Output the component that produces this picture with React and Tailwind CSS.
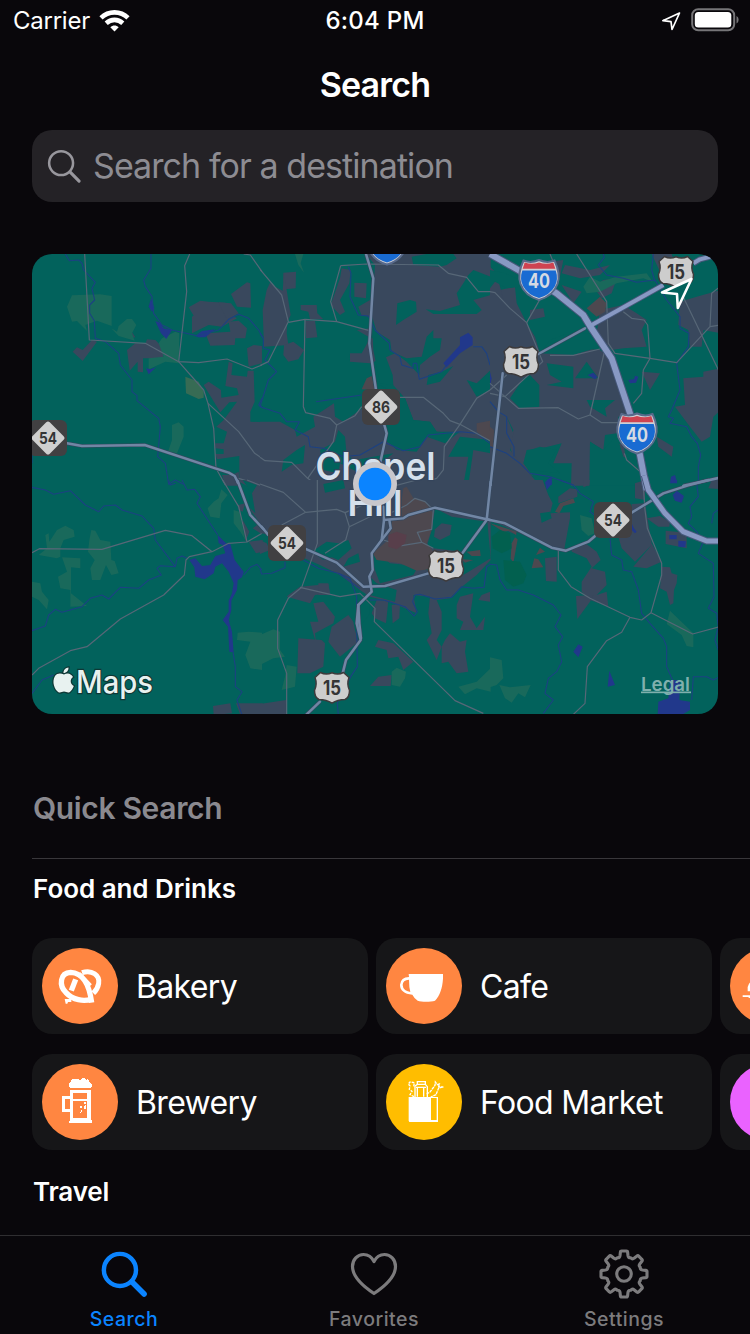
import React from "react";

const GREEN = "#02625c";
const URBAN = "#39485d";
const PARK = "#19695b";
const WATER = "#21388b";
const BROWN = "#4d484f";

/* The map is stored as six tiles, each drawn at three units per pixel. */
const tiles = [
  {
    at: "translate(32 250) scale(.33333)",
    urban: [
      "470,172 505,152 530,155 580,158 585,190 615,205 570,230 530,225 480,250 480,200 520,172 485,197",
      "560,157 597,160 620,190 585,210",
      "597,132 645,97 655,100 657,173 615,170",
      "520,250 595,245 590,215 620,212 645,235 640,265 610,265 608,285 535,287",
      "645,295 665,285 690,288 690,340 650,350",
      "285,300 310,280 340,282 345,268 370,270 390,290 395,325 333,325 333,367 317,365 317,335 293,362",
      "290,250 300,247 310,262 300,263",
      "122,305 135,292 152,300 180,270 195,275 152,333",
      "515,405 530,395 567,420 568,443 620,435 615,415 580,408 590,335 602,340 598,375 645,380 647,362 665,362 668,455 655,485 655,515 692,517 692,707 640,690 622,690 622,618 555,628 550,612 575,612 575,598 550,595 550,580 575,580 585,545 553,530 575,510 615,455 592,457 565,487",
      "570,675 600,675 620,665 625,707 580,707",
    ],
    cut: [],
    park: [
      "120,136 205,133 239,138 239,228 195,212 160,225 165,243 135,213 120,215 105,170",
      "238,235 255,245 260,228 285,207 300,207 313,225 300,250 308,272 260,258",
      "390,265 430,245 442,250 440,340 400,335 350,358 350,325 395,320 380,280",
      "420,525 440,517 455,530 455,560 435,610 408,605 420,570",
    ],
    olive: ["460,380 500,395 515,425 515,443 500,447 462,430"],
    brown: [],
    water: [
      "357,145 367,175 360,185 350,170",
      "370,213 385,218 395,235 420,240 403,267 387,250",
      "490,258 510,243 550,238 520,262 500,262",
      "342,355 355,358 372,352 350,373",
    ],
    river: [
      "100,12 112,32 140,30 150,40 155,60 190,97 180,115 188,150 173,165 173,190 187,212 190,265 220,275 260,310 265,345 300,390 300,425 315,437 315,452 380,505 385,530 377,620 400,640 410,703 430,690 455,703",
      "357,12 357,55 335,90 340,110 360,140 365,190 390,225 420,240 495,257 560,240 590,208 620,193 650,205 680,240 692,262",
      "0,615 0,640",
      "690,445 680,465 690,470",
    ],
    minor: [
      "158,12 172,270 340,280 440,335 515,420 528,460 545,535 552,655 580,705",
      "473,12 458,47 464,125 440,335 500,338 585,327 660,357 690,345",
      "528,460 620,545 668,610 690,625",
      "635,12 655,15 690,65",
      "620,685 690,707",
    ],
    major: ["105,580 150,588 338,585 550,655 590,668 608,678 618,698"],
    inter: [],
  },
  {
    at: "translate(260 250) scale(.33333)",
    urban: [
      "70,68 108,65 107,115 75,118 70,90",
      "20,120 30,98 45,110 68,122 72,70 92,195 82,215 80,250 85,285 12,290 8,180",
      "240,85 245,55 272,60 268,100 240,150 255,185 240,195 212,165",
      "283,98 320,100 318,145 283,140",
      "295,170 330,150 330,200 305,197",
      "290,240 330,235 328,262",
      "122,165 170,165 172,190 190,208 150,207 145,185 122,180",
      "135,212 165,212 172,262 138,265",
      "72,285 100,275 132,300 115,328 85,335 70,315",
      "270,310 305,310 330,265 365,265 390,295 370,325 330,340 270,335",
      "0,515 60,515 105,540 110,560 165,530 160,500 195,478 222,460 225,500 250,515 308,475 378,525 380,575 420,600 470,602 500,560 560,545 692,560 692,707 0,707",
      "345,45 318,12 692,12 692,570 590,548 530,545 510,515 460,510 435,445 395,400 340,300 335,190",
    ],
    cut: [
      "408,225 412,160 450,150 468,155 470,185 430,210",
      "497,178 540,183 600,165 590,130 610,100 625,75 640,60 692,80 692,135 640,150 665,180 650,192 520,192",
      "455,20 500,12 580,12 590,25 560,45 540,50 460,45",
      "335,195 350,245 390,270 395,305 440,325 485,320 500,260 520,240 520,265 545,265 540,300 510,320 480,345 478,375 440,335 405,310 378,322 398,375 400,405 360,400 340,300",
      "505,375 545,365 580,348 540,395 500,405",
      "350,400 435,445 460,510 510,515 530,545 600,545 555,580 500,560 470,605 410,600 380,570 380,520",
      "600,560 692,570 692,610 640,600 625,705 610,705 625,620 565,620",
      "65,665 70,630 110,600 135,585 130,640 95,645",
      "180,600 225,575 235,540 255,560 260,615 285,630 400,610 375,630 310,650 300,670 240,640 235,670 190,660",
      "620,390 650,400 692,360 692,420 650,440",
    ],
    park: ["105,12 130,12 122,40 132,68 115,45"],
    olive: [],
    brown: [
      "320,385 335,378 345,420 305,418",
      "650,520 690,512 690,575 650,545",
    ],
    water: [
      "550,340 600,285 600,262 625,248 638,262 638,285 600,310 560,352",
    ],
    river: [
      "265,50 273,70 270,140 295,195 325,198 345,240 388,280 390,300 420,320 425,345 458,355 460,340 470,340 478,388 545,365 560,345",
      "640,290 665,290 680,310 690,345",
      "0,250 10,265 10,295 30,300 15,330 50,365 25,390 0,470 60,490 80,515 118,515 105,540 145,560 150,590 190,595 250,620 300,615 370,575 430,602 480,590 505,555 600,545 650,550 690,580",
      "168,455 305,435",
    ],
    minor: [
      "0,58 65,135 85,215 25,335 0,347",
      "85,217 135,208 230,215 328,242",
      "135,208 130,470 137,488 210,505 230,525 285,497 305,470",
      "230,525 220,575 143,685 95,637 15,632 0,622",
      "143,685 170,705",
      "242,47 320,42 535,45 565,70 620,82 655,125 690,125",
      "242,47 212,155 230,215",
      "420,442 490,442 550,490 570,512 600,523 690,572",
      "690,420 650,445 600,523 553,590 550,660 530,685 500,695 450,690 420,705",
    ],
    major: ["318,12 340,85 328,280 348,420", "373,525 380,550 358,650"],
    inter: [],
  },
  {
    at: "translate(490 250) scale(.33333)",
    urban: [
      "0,115 30,120 75,110 80,160 110,220 135,260 150,310 215,290 330,300 370,330 400,430 420,490 385,500 380,550 345,555 340,600 300,575 298,707 243,707 245,640 190,640 215,580 155,595 110,600 100,640 130,680 75,640 60,590 70,540 50,500 0,540",
      "0,500 50,500 70,550 60,600 100,650 150,707 0,707",
      "0,50 20,70 40,150 0,150",
      "330,180 400,165 440,190 470,210 455,240 470,290 400,295 365,300 320,250",
      "225,45 300,60 360,45 330,75 270,85 215,70",
      "340,90 380,85 365,130 335,145 310,110",
      "215,105 275,125 250,160",
      "485,12 545,12 560,55 510,65",
      "570,155 620,140 692,120 692,250 640,240 635,290 600,290 595,240 565,225",
      "580,385 640,380 640,365 692,355 692,480 670,500 660,560 635,575 600,530 555,470 585,465",
      "455,365 510,370 480,420",
      "500,560 550,590 545,620 505,590",
      "370,585 400,580 410,640 385,610",
      "120,180 160,175 165,200 120,210",
      "100,45 220,30 210,80 160,100 100,100",
    ],
    cut: [
      "0,60 45,70 90,90 90,110 50,115 15,95 0,115",
      "170,340 210,345 250,350 250,415 170,405 215,395 180,375",
      "255,385 290,335 325,385",
      "60,445 100,385 120,375 148,405 148,470 90,475",
      "290,450 375,450 345,475 350,500 300,470",
      "150,310 180,270 220,255 300,250 330,290 250,315",
      "300,575 340,600 380,555 400,620 450,640 450,707 300,707",
      "120,600 150,590 200,600 175,640 210,670 120,660",
    ],
    park: [
      "280,110 300,80 330,95 380,80 470,70 488,95 460,85 380,100 330,125 290,130",
    ],
    olive: [],
    brown: ["290,175 330,140 350,160 345,185 320,200", "0,530 12,540 10,590 0,590"],
    water: [
      "293,375 310,368 322,380 315,388",
      "415,390 432,388 435,377 445,380 438,398 420,400",
      "543,680 555,675 562,700 540,700",
      "170,690 185,680 185,705 170,705",
      "0,365 5,385 0,410",
    ],
    river: [
      "340,12 343,22 325,45 350,75 400,85 440,97 495,90 530,150 570,200 570,235 597,250 595,290 560,340 570,420 545,480 535,500 550,505 540,520 590,530 605,560 622,580 632,615 625,650 625,705",
      "490,12 485,60 495,95",
      "0,590 50,610 90,640 120,670 180,680 250,705",
      "0,455 25,485 50,500 50,550 72,590 72,620",
    ],
    minor: [
      "0,125 15,128 60,175 110,218 158,335 110,380 45,440 0,400",
      "180,12 200,60 110,218",
      "180,316 250,316 330,297",
      "0,430 45,440 85,475 205,473 265,507 300,495 335,518 385,518",
      "300,495 345,297",
      "260,12 350,155 355,280 375,310 480,325 560,338 660,230 665,130 690,110",
      "400,185 425,205 462,210 473,225 480,325 460,360 455,430 430,460",
      "560,100 690,370",
      "660,230 690,225",
      "403,610 410,630 450,665",
      "0,420 50,375",
    ],
    major: ["145,312 285,235", "38,370 2,700", "580,707 690,683"],
    inter: [
      { p: "300,228 520,105", w: 14 },
      { p: "610,40 630,28 692,12", w: 14 },
      { p: "0,12 85,60 200,130 280,195 300,228 365,325 420,490 450,615 470,720", w: 20 },
    ],
  },
  {
    at: "translate(32 480) scale(.33333)",
    urban: [
      "572,0 610,0 640,15 655,30 655,90 692,140 692,0",
      "618,75 640,70 632,95 620,90",
      "632,120 652,155 640,185",
      "662,145 675,135 692,152 690,163",
      "650,185 692,180 692,215 672,220",
      "543,678 595,670 600,700 545,705",
      "612,670 692,670 692,705 625,705",
    ],
    cut: ["632,0 675,15 660,40 670,100 650,80 655,35"],
    park: [
      "40,165 50,160 52,185 75,150 100,137 125,150 128,170 95,180 85,205 85,230 75,235 20,225 45,205",
      "172,180 178,150 190,152 205,180 235,185 238,240 248,243 260,280 238,285 222,255 205,300 180,300 175,265 188,240 168,215",
      "90,232 145,235 145,265 117,262 117,340 165,378 115,380 115,330 85,325 78,290 105,275",
      "0,305 25,310 30,335 50,360 45,388 20,360 0,350",
      "560,55 568,28 587,45 568,70 563,115 535,110 527,85 545,65",
      "605,90 622,95 640,180 625,155 605,130",
      "617,458 650,455 690,458 690,570 655,565 640,525 655,485 615,480",
    ],
    olive: [],
    brown: [],
    water: [
      "557,165 582,190 595,192 608,240 635,275 630,292 617,300 615,330 598,362 598,390 590,420 600,455 605,517 592,515 588,440 572,420 590,395 590,362 600,340 605,310 590,275 570,250 550,260 545,280 518,298 490,290 487,262 472,240 490,235 510,258 535,255 550,228 580,220 572,195 560,190",
    ],
    river: [
      "0,22 40,30 65,43 115,32 160,75 200,95 215,78 250,75 270,90 330,108 365,145 370,180 430,260 435,235 450,228 465,235",
      "430,260 385,257 375,265 388,285 350,300 320,325 265,322 230,357 210,345 175,355 150,380 90,397 70,388 50,405 40,438 0,452",
      "450,0 465,30 488,28 505,50 495,70 557,165",
      "410,0 415,15 430,10",
      "603,515 610,560 610,620 630,635 615,660 630,705",
      "635,285 655,262 675,253 690,270",
      "0,640 30,600 65,585",
    ],
    minor: [
      "0,218 22,206 210,208 400,151 480,167 540,215",
      "0,585 20,565 115,512 165,500 265,417 395,345 457,285 462,240 472,230 540,215 590,190 645,186 690,160",
      "572,0 620,80 645,186",
      "645,0 690,18",
    ],
    major: ["617,3 655,105 694,147"],
    inter: [],
  },
  {
    at: "translate(260 480) scale(.33333)",
    urban: [
      "0,0 692,0 692,240 650,285 600,325 570,355 530,360 545,395 545,450 530,480 545,500 530,540 500,480 515,460 505,400 510,350 460,345 470,400 390,365 330,350 300,330 240,285 180,255 110,225 45,165 0,160",
      "0,180 20,190 30,210 0,222",
      "335,400 350,360 385,362 378,430 345,415",
      "395,375 420,372 418,415 398,430",
      "85,345 120,320 205,312 210,340 165,345 150,370 80,350",
      "175,310 205,310 210,345 175,345",
      "160,370 190,365 225,410 220,430 165,460 168,490 150,425 175,425",
      "215,440 265,405 280,425 285,450 295,485 240,530 205,485",
      "115,475 185,480 195,490 190,560 150,580 112,580",
      "345,500 355,480 400,490 460,545 430,570 415,530 385,535 380,510",
      "330,618 355,590 395,585 392,618",
      "0,672 78,660 78,705 0,705",
      "590,375 600,350 640,340 630,410 650,445 675,410 670,450 600,450 610,425 590,415",
      "555,480 570,460 600,485 620,480 615,515 625,575 590,580 565,545 545,550 545,500",
      "655,360 665,345 690,335 690,365",
    ],
    cut: [
      "190,12 250,0 255,25 195,38",
      "200,185 235,190 265,180 275,205 235,240 215,232 190,240 155,215",
      "265,235 295,220 300,245 250,260",
      "330,230 345,210 390,250 475,258 460,285 360,310",
      "525,85 575,110 682,125 692,235 610,285 610,215 520,205 500,200 515,150",
      "480,265 530,245 520,275",
      "330,290 350,310 410,330 405,365 330,345",
      "300,350 330,360 330,400 300,440",
    ],
    slate: ["525,148 545,130 575,135 570,165 540,180 522,170"],
    park: [
      "0,465 40,448 60,455 60,510 75,530 40,535 0,555",
      "80,555 110,560 105,620 65,630 75,590",
      "395,575 410,563 438,575 435,595 420,620 395,615",
      "595,620 650,605 692,565 692,635 650,625 615,643",
    ],
    olive: [],
    brown: [
      "430,25 440,20 460,55 495,65 520,100 515,150 500,190 520,215 545,215 540,265 470,272 420,250 350,240 338,220 385,180 390,140 400,115 425,110 425,60",
      "620,215 660,210 662,228 635,228",
      "605,238 640,240 615,248",
    ],
    water: [],
    river: [
      "0,265 5,282 35,280 75,263 75,245",
      "130,240 175,265 235,280 270,295 290,350 290,430 292,560 272,590 232,670 235,705",
      "330,360 370,360 435,380 462,408 472,395 458,365 465,345 480,343 525,357 575,352 605,320 640,325 672,322 680,260 692,253",
      "235,280 300,325",
    ],
    minor: [
      "172,0 172,190 125,322 85,355 53,420 53,505 80,580 80,705",
      "0,12 70,37 137,97 65,135",
      "137,97 230,88 255,98 325,68",
      "255,98 268,140 257,180 195,220",
      "268,140 330,110",
      "120,322 240,350 300,340 345,385 343,425 585,662 670,700",
      "370,180 425,197 485,187 520,205",
      "485,187 472,157 515,148 520,90 495,65 465,55 440,75 390,100",
      "395,20 470,0",
    ],
    major: [
      "5,140 25,165",
      "135,206 230,248 310,320 375,318 505,280",
      "370,80 372,120 365,180 335,220 338,270 328,290 335,335 295,375 290,430 302,480 258,540 248,580",
      "372,120 430,115 445,105 525,83 690,120",
      "388,120 392,145 365,180",
      "692,5 680,120 608,218",
      "295,375 298,430 303,475",
      "180,665 138,705",
    ],
    inter: [],
  },
  {
    at: "translate(490 480) scale(.33333)",
    urban: [
      "0,0 158,0 175,45 188,70 180,100 240,97 240,115 222,212 185,203 0,120",
      "205,50 240,25 262,28 262,50 205,70",
      "280,0 300,0 298,15 280,22",
      "0,130 75,155 80,165 0,130",
      "165,235 200,230 200,305 168,303",
      "245,205 290,193 320,215 332,240 305,265 345,275 350,315 320,345 350,335 355,380 300,360 275,335 275,305 305,260 290,235 245,215",
      "258,348 310,345 300,365 262,417",
      "435,10 465,0 465,60 435,55",
      "385,170 425,120 425,72 465,70 485,190 515,245 470,265 430,260 485,195 435,245 395,205",
      "470,115 510,108 540,125 538,140 505,140",
      "515,260 540,262 545,280 562,285 560,310 552,330 550,370 540,375 530,335 510,325",
      "527,152 590,158 590,205 527,192",
      "665,0 692,0 692,28 655,25",
    ],
    cut: ["150,100 180,95 185,115 155,128"],
    park: [
      "270,105 305,115 315,160 295,168 275,150",
      "540,392 610,460 610,502 590,498 575,465 530,432",
      "0,532 35,540 40,595 20,615 0,622",
      "28,615 60,622 122,615 105,652 85,640 65,668 45,655",
    ],
    olive: [],
    brown: [
      "195,95 210,70 250,55 255,68 220,78 208,100",
      "65,190 75,172 83,178 70,250 62,235",
      "150,203 165,215 138,225",
      "133,235 145,238 160,262 125,265",
      "0,130 80,155 78,165 60,152 40,155",
    ],
    water: [
      "548,45 560,32 582,48 575,68 555,62",
      "538,165 560,165 560,178 538,178",
      "565,182 588,184 586,202 565,200",
      "425,130 432,145 440,155 435,160 425,150",
      "165,5 185,0 185,12 170,30",
      "543,0 562,0 560,8 545,8",
      "265,493 278,500 265,532 250,515",
      "358,572 375,615 353,620",
      "540,600 570,600 568,660 600,665 600,690 575,705 503,705 505,665 535,655",
    ],
    river: [
      "210,0 250,15 270,40 310,65 300,95 320,110",
      "360,175 365,225 395,240 400,270 425,275 445,330 455,400 480,430 520,475 530,500 530,560 550,605",
      "0,253 20,255 30,300 50,330 85,330 130,345 190,375 213,405 195,440 218,470 205,495 215,545 200,575 175,595 165,640 190,660 160,700",
      "620,10 625,50 600,80 605,110 595,130 620,155 640,185 625,220 670,250 672,350 655,385 680,400 685,440 675,480 685,510",
      "605,660 610,590 650,590 670,600 690,590",
      "690,85 670,100 665,130",
    ],
    minor: [
      "205,210 205,270 243,320 300,355 420,412 455,420 483,398 515,285 515,250 472,145 465,90 460,20",
      "483,398 608,462 690,440",
      "420,412 395,457 350,482 292,560 285,670 250,703",
    ],
    major: [
      "-10,118 45,130 185,203 228,212 295,185 325,160",
      "425,98 520,40 592,17 655,0",
    ],
    inter: [
      { p: "463,-14 475,30 525,100 580,155 650,183 692,183", w: 17 },
    ],
  },
];

function Polys({ list, fill }) {
  return list.map((p) => <polygon key={p} points={p} fill={fill} />);
}

function Lines({ list, stroke, width, cap }) {
  return list.map((p) => (
    <polyline key={p} points={p} fill="none" stroke={stroke} strokeWidth={width} strokeLinejoin="round" strokeLinecap={cap} />
  ));
}

function UsShield({ x, y }) {
  return (
    <g transform={`translate(${x} ${y})`}>
      <path
        d="M-11.5-15.5Q-6-12.5 0-15.2Q6-12.500 11.500-15.500L17-10.500Q14.500-4 17.500 2.500Q17.500 9.500 13 11.500Q5.500 11.500 0 15.200Q-5.500 11.500-13 11.500Q-17.500 9.500-17.500 2.500Q-14.500-4-17-10.500Z"
        fill="#cdcdcd" stroke="#3d3b3c" strokeWidth="1.500" strokeLinejoin="round"
      />
      <text y="7" textAnchor="middle" className="text-[19.500px] font-bold" fill="#333435" textLength="18" lengthAdjust="spacingAndGlyphs">15</text>
    </g>
  );
}

function StateShield({ x, y, n }) {
  return (
    <g transform={`translate(${x} ${y})`}>
      <rect x="-19" y="-18" width="38" height="36" rx="6" fill="#414042" />
      <rect x="-12.300" y="-12.300" width="24.600" height="24.600" rx="2.500" fill="#cfcfcf" transform="rotate(45)" />
      <text y="6" textAnchor="middle" className="text-[16.500px] font-bold" fill="#333435" textLength="18" lengthAdjust="spacingAndGlyphs">{n}</text>
    </g>
  );
}

function Interstate({ x, y, label }) {
  const body = "M-15.500-19.500Q-8-16.500 0-20Q8-16.500 15.500-19.500Q22-6 18.500 4Q14 16 0 20Q-14 16-18.500 4Q-22-6-15.500-19.500Z";
  return (
    <g transform={`translate(${x} ${y})`}>
      <path d={body} fill="#cfd0d6" stroke="#586a8b" strokeWidth="2" />
      <path d="M-16.700-9.500H16.700Q19.500-1 16 6Q11 15 0 18Q-11 15-16 6Q-19.500-1-16.700-9.500Z" fill="#196bd2" />
      <path d="M-14.300-17.500Q-7-15 0-17.500Q7-15 14.300-17.500L16.300-11.200H-16.300Z" fill="#cf4351" />
      {label && (
        <text y="8" textAnchor="middle" className="text-[20px] font-bold" fill="#d5dae3" textLength="22" lengthAdjust="spacingAndGlyphs">{label}</text>
      )}
    </g>
  );
}

function MapCard() {
  return (
    <svg
      viewBox="32 254 686 460"
      className="ml-8 mt-[52px] block h-[460px] w-[686px] shrink-0 rounded-[20px] font-['Inter','Liberation_Sans',sans-serif]"
    >
      <rect x="32" y="254" width="686" height="460" fill={GREEN} />
      {tiles.map((t) => (
        <g key={t.at} transform={t.at}>
          <Polys list={t.urban} fill={URBAN} />
          <Polys list={t.cut} fill={GREEN} />
          <Polys list={t.slate || []} fill={URBAN} />
          <Polys list={t.park} fill={PARK} />
          <Polys list={t.olive} fill="#376b54" />
          <Polys list={t.brown} fill={BROWN} />
          <Polys list={t.water} fill={WATER} />
          <Lines list={t.river} stroke="#1c4183" width="3.2" />
          <Lines list={t.minor} stroke="#576777" width="3.6" />
        </g>
      ))}
      <g transform="translate(260 480) scale(.33333)">
        <polygon points="385,165 410,155 440,165 435,190 410,208 385,200" fill="#583f4b" />
      </g>
      <g transform="translate(490 480) scale(.33333)" fill="#02604f">
        <polygon points="5,170 30,150 60,160 65,205 35,220 8,205" />
        <polygon points="40,240 90,245 110,285 100,310 70,320 45,300" />
      </g>
      {tiles.map((t) => (
        <g key={t.at} transform={t.at}>
          <Lines list={t.major} stroke="#35485f" width="11" />
        </g>
      ))}
      {tiles.map((t) => (
        <g key={t.at} transform={t.at}>
          <Lines list={t.major} stroke="#7186a4" width="7.500" cap="round" />
        </g>
      ))}
      <g stroke="#7186a4" strokeWidth="2.500">
        <path d="M490.700 483.300L490.500 486M237.500 482L238 483" />
      </g>
      {tiles.map((t) => (
        <g key={t.at} transform={t.at}>
          {t.inter.map((r) => (
            <polyline key={r.p} points={r.p} fill="none" stroke="#46587a" strokeWidth={r.w + 4} strokeLinejoin="round" />
          ))}
          {t.inter.map((r) => (
            <polyline key={r.p + "f"} points={r.p} fill="none" stroke="#8899c3" strokeWidth={r.w - 2} strokeLinejoin="round" />
          ))}
        </g>
      ))}
      <Interstate x={387} y={244.500} />
      <Interstate x={539} y={280} label="40" />
      <Interstate x={637} y={433.500} label="40" />
      <UsShield x={676} y={272} />
      <UsShield x={521} y={362} />
      <UsShield x={446} y={566} />
      <UsShield x={332} y={688} />
      <StateShield x={48} y={438} n="54" />
      <StateShield x={381} y={407} n="86" />
      <StateShield x={287} y={543} n="54" />
      <StateShield x={613} y={520} n="54" />
      <g fill="#d5e0ec" stroke="#35455c" strokeWidth="2.500" paintOrder="stroke" className="font-semibold">
        <text x="315.500" y="480" className="text-[38px]" textLength="120" lengthAdjust="spacingAndGlyphs">Chapel</text>
        <text x="347.500" y="516" className="text-[36px]" textLength="55" lengthAdjust="spacingAndGlyphs">Hill</text>
      </g>
      <circle cx="375" cy="484" r="22" fill="#c8c7cc" />
      <circle cx="375" cy="484" r="16.300" fill="#0b84ff" />
      <path d="M691.500 279L662 292.500L677 294L677.800 308Z" fill="#02625c" stroke="#fff" strokeWidth="2.600" strokeLinejoin="round" />
      <g stroke="#0e3735" strokeWidth="2.400" paintOrder="stroke" fill="#e8f2f0">
        <path d="M70.500 674.500C68.800 672.800 66 673.500 64 674.400C60.500 673 57.300 673 55 676C51.500 682 54.500 689.500 58.500 692.300C60.500 693.300 62 691.600 64 691.600C66 691.600 67.500 693.300 69.500 692.300C71.500 691 73 688.500 73.800 686C70.500 684.500 69.300 679.500 73 677C72.400 675.800 71.500 675 70.500 674.500Z M63.500 673C63.300 670 65.700 667.800 68.500 667.500C68.700 670.500 66.500 673 63.500 673Z" />
        <text x="76" y="693" className="text-[31.500px] font-medium" textLength="77" lengthAdjust="spacingAndGlyphs">Maps</text>
      </g>
      <text x="641" y="691" className="text-[19px] font-semibold" fill="#7fb0ad" textLength="49" lengthAdjust="spacingAndGlyphs">Legal</text>
      <rect x="641" y="691.500" width="50" height="1.700" fill="#7fb0ad" />
    </svg>
  );
}

function StatusBar() {
  return (
    <header className="relative flex h-10 shrink-0 items-center justify-between pl-[13px] pr-[11px]">
      <div className="flex items-center gap-[9px]">
        <span className="pt-px text-[24px] leading-[41px] tracking-[-0.25px]">Carrier</span>
        <svg width="31" height="24" viewBox="0 0 31 24" className="mt-px" fill="none" stroke="#fff" strokeWidth="4.600">
          <path d="M2 8.800C9.500 1.600 21.500 1.600 29 8.800" />
          <path d="M7.200 14.200C12 9.800 19 9.800 23.800 14.200" />
          <path d="M11.300 18.200C13.800 16 17.200 16 19.700 18.200L15.500 22.600Z" fill="#fff" stroke="none" />
        </svg>
      </div>
      <span className="absolute inset-x-0 top-px text-center text-[24px] font-medium leading-10 tracking-[0.250px]">6:04 PM</span>
      <div className="flex items-center gap-[10px]">
        <svg width="20" height="20" viewBox="0 0 20 20" className="mt-px" fill="none" stroke="#fff" strokeWidth="1.700" strokeLinejoin="round">
          <path d="M18.500 2L1.800 9.700L10 10.600L11 18.500Z" />
        </svg>
        <svg width="48" height="24" viewBox="0 0 48 24">
          <rect x="1.200" y="1.200" width="42" height="21" rx="6" fill="none" stroke="#767578" strokeWidth="2" />
          <rect x="3.800" y="4" width="36.500" height="15.500" rx="3.500" fill="#fff" />
          <path d="M45.500 8C48.300 9.500 48.300 14 45.500 15.500Z" fill="#767578" />
        </svg>
      </div>
    </header>
  );
}

function BakeryIcon() {
  return (
    <svg width="76" height="76" viewBox="0 0 228 228" fill="none" stroke="#fff" strokeWidth="14">
      <path d="M148 153C126 162 92 156 72 134C50 112 54 74 86 73C120 74 142 108 149 164" strokeWidth="16" />
      <path d="M120 74C150 64 174 82 170 106C168 120 162 128 154 136" strokeWidth="15" />
      <path d="M112 76L146 112" strokeWidth="10" />
      <path d="M88 128L101 94" strokeWidth="16" />
      <path d="M68 153H88V162H78L76 167H71Z" fill="#fff" stroke="none" />
    </svg>
  );
}

function CafeIcon() {
  return (
    <svg width="76" height="76" viewBox="0 0 228 228">
      <path d="M68 78H171V92C169 120 162 142 147 158C133 162 107 162 95 158Q84 150 79 140Q42 136 42 110Q44 88 69 87ZM69 95Q50 96 50 111Q51 128 73 132Q69 117 69 95Z" fill="#fff" fillRule="evenodd" />
    </svg>
  );
}

function BreweryIcon() {
  return (
    <svg width="76" height="76" viewBox="0 0 228 228" fill="#fff" shapeRendering="crispEdges">
      <path d="M84 72Q78 62 84 56L90 46H110L116 49L121 42L128 43L132 48L138 46L142 55L150 61L148 72Z" />
      <path d="M84 78H147V168H150V177H81V170H84V144H60V96H84ZM93 86V106H136V86ZM93 110V162H136V110ZM68 104V136H84V104Z" fillRule="evenodd" />
      <path d="M126 114H132V120H126ZM115 126H121V132H115ZM130 124H133V136H127V128ZM117 138H121V143H113V147H117Z" />
    </svg>
  );
}

function MarketIcon() {
  return (
    <svg width="76" height="76" viewBox="0 0 228 228" fill="none" stroke="#fff" strokeWidth="4">
      <path d="M68 99H156V174H70L68 170ZM135 102V168H152V102Z" fill="#fff" fillRule="evenodd" stroke="none" />
      <path d="M87 100V66L94 61V53H118V61L124 68V100M94 61H118M90 70H120M94 70V98M113 70V98" />
      <path d="M84 98L72 92L78 82L70 76L72 66L67 60L72 54L85 56L83 68" strokeDasharray="8 3" />
      <path d="M122 90L132 84L147 64L148 54L154 62L160 60L158 68L172 69L158 72L150 92L134 99" strokeDasharray="9 2" />
    </svg>
  );
}

function DiningIcon() {
  return (
    <svg width="76" height="76" viewBox="0 0 228 228" fill="#fff">
      <path d="M53 130V117L57 107L64 98H164L172 130ZM38 142H190V150H58L54 147H38Z" />
    </svg>
  );
}

function Tile({ label, icon, color }) {
  return (
    <div className="flex h-24 w-[336px] shrink-0 items-center rounded-[20px] bg-[#161618] pl-[10px]">
      <div className={"h-[76px] w-[76px] shrink-0 overflow-hidden rounded-full " + color}>{icon}</div>
      {label && <span className="ml-[18px] whitespace-nowrap pt-px text-[32px] leading-10 tracking-[-0.650px]">{label}</span>}
    </div>
  );
}

function Magnifier({ size, width, className }) {
  return (
    <svg width={size} height={size} viewBox="0 0 36 36" fill="none" stroke="currentColor" strokeWidth={width} strokeLinecap="round" className={className}>
      <circle cx="14.500" cy="14.500" r="12.300" />
      <path d="M23.600 23.600L33 33" strokeWidth={width * 1.250} />
    </svg>
  );
}

function Gear() {
  const teeth = [0, 45, 90, 135, 180, 225, 270, 315];
  const pt = (r, a) => {
    const t = ((a - 90) * Math.PI) / 180;
    return `${(25 + r * Math.cos(t)).toFixed(2)} ${(25 + r * Math.sin(t)).toFixed(2)}`;
  };
  const d = teeth
    .map(
      (a, i) =>
        `${i ? "L" : "M"}${pt(19, a - 12)}L${pt(22, a - 9.5)}Q${pt(23.4, a - 8.5)} ${pt(23.1, a - 5.5)}L${pt(23.1, a + 5.5)}Q${pt(23.4, a + 8.5)} ${pt(22, a + 9.5)}L${pt(19, a + 12)}Q${pt(16.6, a + 15)} ${pt(17.6, a + 22.5)}Q${pt(16.6, a + 30)} ${pt(19, a + 33)}`
    )
    .join("");
  return (
    <svg width="50" height="50" viewBox="0 0 50 50" fill="none" stroke="currentColor" strokeWidth="3.100" strokeLinejoin="round">
      <path d={d + "Z"} />
      <circle cx="25" cy="25" r="7.300" />
    </svg>
  );
}

function Tab({ label, color, children }) {
  return (
    <div className={"flex w-[250px] flex-col items-center pr-[2px] " + color}>
      <div className="flex h-[76px] items-center">{children}</div>
      <span className="-mt-[5px] text-[19.500px] font-medium leading-6 tracking-[0.5px]">{label}</span>
    </div>
  );
}

export default function App() {
  return (
    <div className="flex h-[1334px] w-[750px] flex-col overflow-hidden bg-[#09070b] font-['Inter','Liberation_Sans',sans-serif] text-white">
      <StatusBar />
      <h1 className="h-[90px] shrink-0 text-center text-[34px] font-semibold leading-[89px] tracking-[-0.8px]">Search</h1>
      <div className="ml-8 flex h-[72px] w-[686px] shrink-0 items-center rounded-[20px] bg-[#242226] pl-[15px] text-[#8d8c92]">
        <Magnifier size={35} width={2.600} className="text-[#98979d]" />
        <span className="ml-[11px] text-[34px] leading-[72px] tracking-[-0.930px]">Search for a destination</span>
      </div>
      <MapCard />
      <h2 className="ml-[33px] mt-[74px] shrink-0 text-[30px] font-semibold leading-10 tracking-[-0.350px] text-[#8a898f]">Quick Search</h2>
      <div className="ml-8 mt-[30px] h-px shrink-0 bg-[#39373b]" />
      <h3 className="ml-[33px] mt-[10px] shrink-0 text-[26px] font-semibold leading-10 tracking-[-0.050px]">Food and Drinks</h3>
      <div className="ml-8 mt-[29px] grid shrink-0 grid-cols-[336px_336px_336px] gap-x-2 gap-y-5">
        <Tile label="Bakery" icon={<BakeryIcon />} color="bg-[#ff8641]" />
        <Tile label="Cafe" icon={<CafeIcon />} color="bg-[#ff8641]" />
        <Tile icon={<DiningIcon />} color="bg-[#ff8641]" />
        <Tile label="Brewery" icon={<BreweryIcon />} color="bg-[#ff8641]" />
        <Tile label="Food Market" icon={<MarketIcon />} color="bg-[#ffbd00]" />
        <Tile color="bg-[#ea62ff]" />
      </div>
      <h3 className="ml-[33px] mt-[22px] shrink-0 text-[26px] font-semibold leading-10 tracking-[-0.2px]">Travel</h3>
      <nav className="mt-auto flex h-[99px] shrink-0 border-t border-[#2f2e31]">
        <Tab label="Search" color="text-[#0b84ff]">
          <Magnifier size={47} width={3.400} />
        </Tab>
        <Tab label="Favorites" color="text-[#7c7b7d]">
          <svg width="48" height="44" viewBox="0 0 48 44" fill="none" stroke="currentColor" strokeWidth="3.200" strokeLinejoin="round">
            <path d="M24 41.500C12 33.500 2.500 24.500 2.500 14.500C2.500 7.500 7.500 2.500 13.500 2.500C18.500 2.500 22 5.500 24 9.500C26 5.500 29.500 2.500 34.500 2.500C40.500 2.500 45.500 7.500 45.500 14.500C45.500 24.500 36 33.500 24 41.500Z" />
          </svg>
        </Tab>
        <Tab label="Settings" color="text-[#7c7b7d]">
          <Gear />
        </Tab>
      </nav>
    </div>
  );
}
